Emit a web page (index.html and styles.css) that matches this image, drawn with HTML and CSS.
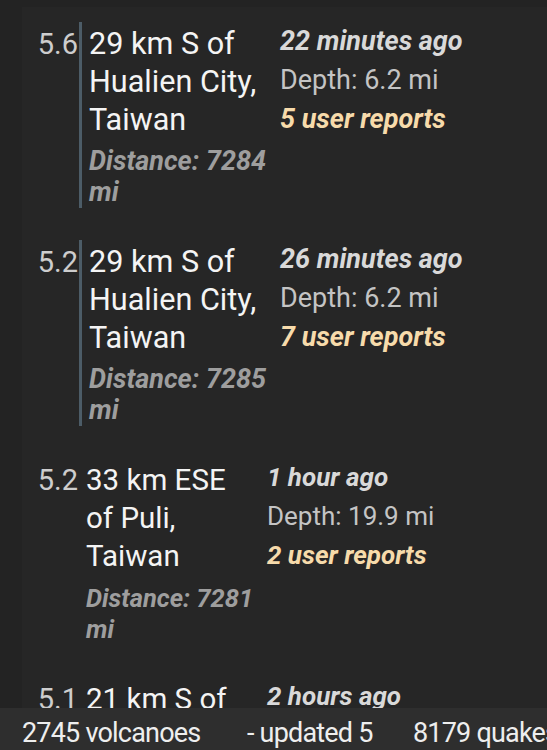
FILE: index.html
```html
<!DOCTYPE html>
<html lang=en>
<head>
<title>Quakes</title>
<meta charset=utf-8>
<link rel="stylesheet" href="styles.css">
</head>
<body>

<div id="list">

<div class="quake">
	<div class="mag">5.6</div>
	<div class="place felt">
		<div class="name">29 km S of Hualien City, Taiwan</div>
		<div class="dist">Distance: 7284 mi</div>
	</div>
	<div class="info">
		<div class="ago">22 minutes ago</div>
		<div class="depth">Depth: 6.2 mi</div>
		<div class="reports">5 user reports</div>
	</div>
</div>

<div class="quake">
	<div class="mag">5.2</div>
	<div class="place felt">
		<div class="name">29 km S of Hualien City, Taiwan</div>
		<div class="dist">Distance: 7285 mi</div>
	</div>
	<div class="info">
		<div class="ago">26 minutes ago</div>
		<div class="depth">Depth: 6.2 mi</div>
		<div class="reports">7 user reports</div>
	</div>
</div>

<div class="quake small">
	<div class="mag">5.2</div>
	<div class="place">
		<div class="name">33 km ESE of Puli, Taiwan</div>
		<div class="dist">Distance: 7281 mi</div>
	</div>
	<div class="info">
		<div class="ago">1 hour ago</div>
		<div class="depth">Depth: 19.9 mi</div>
		<div class="reports">2 user reports</div>
	</div>
</div>

<div class="quake small">
	<div class="mag">5.1</div>
	<div class="place">
		<div class="name">21 km S of Hualien City, Taiwan</div>
		<div class="dist">Distance: 7284 mi</div>
	</div>
	<div class="info">
		<div class="ago">2 hours ago</div>
		<div class="depth">Depth: 6.2 mi</div>
	</div>
</div>

</div>

<div id="status">
	<span class="volcanoes">2745 volcanoes</span>
	<span class="updated">- updated 5</span>
	<span class="quakes">8179 quakes</span>
</div>

</body>
</html>
```

FILE: styles.css
```css
html, body { background: #232323; }

body {
	margin: 0;
	font-family: Roboto, "Noto Sans", sans-serif;
	color: #f2f2f2;
	overflow: hidden;
	height: 750px;
}

#list {
	box-sizing: border-box;
	margin: 7px 0 0 22px;
	padding-top: 15px;
	background: #262626;
	height: 743px;
	overflow: hidden;
}

.quake {
	display: flex;
	align-items: flex-start;
	margin-bottom: 32px;
}

.mag {
	width: 56px;
	padding-top: 3px;
	text-align: right;
	font-size: 29px;
	line-height: 38px;
	color: #cdcdcd;
}

.place {
	width: 178px;
	margin-left: 1px;
	padding: 3px 0 0 7px;
}
.place.felt { border-left: 3px solid #4c5c67; }

.name { font-size: 30.6px; line-height: 38px; color: #f4f4f4; }

.dist {
	margin-top: 7px;
	font-size: 27px;
	line-height: 31px;
	font-weight: bold;
	font-style: italic;
	color: #9e9e9e;
}

.info { margin-left: 13px; font-size: 27px; line-height: 39px; }
.ago { font-weight: bold; font-style: italic; color: #d9d9d9; }
.depth { color: #c4c4c4; }
.reports { font-weight: bold; font-style: italic; color: #f7dbab; }

/* the older rows come out a touch smaller */
.small .place { width: 168px; }
.small .name { font-size: 29.5px; }
.small .dist { font-size: 25.5px; margin-top: 8px; }
.small .info { font-size: 26px; }

#status {
	position: fixed;
	left: 0; right: 0; bottom: 0;
	box-sizing: border-box;
	height: 42px;
	padding-top: 9px;
	display: flex;
	white-space: nowrap;
	overflow: hidden;
	background: #2e2e2e;
	color: #eeeeee;
	font-size: 27px;
	letter-spacing: -0.8px;
	line-height: 33px;
}
#status span { flex: none; }
#status .volcanoes { width: 225px; padding-left: 22px; }
#status .updated { width: 166px; }
```
